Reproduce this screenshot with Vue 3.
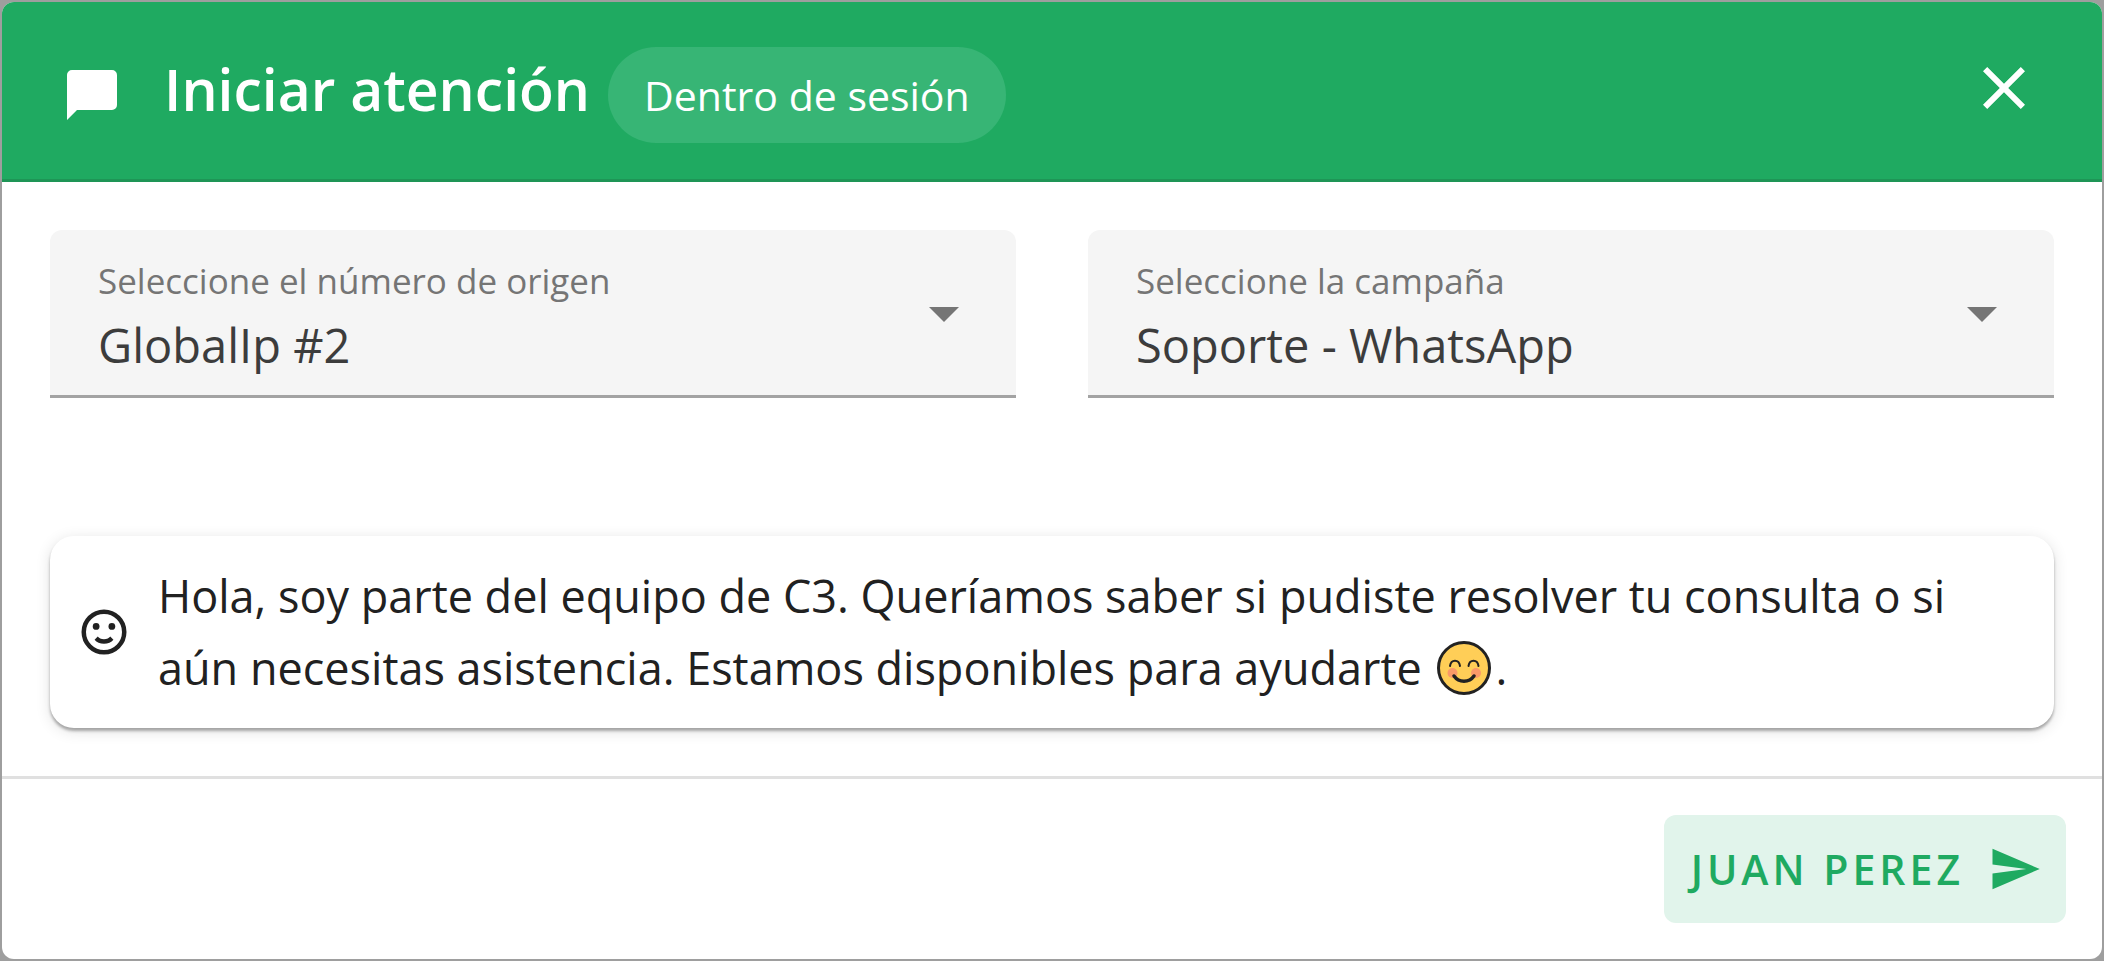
<script setup>
import { ref } from 'vue'

const fields = [
  { id: 'origin', label: 'Seleccione el número de origen', options: ['GlobalIp #2'] },
  { id: 'campaign', label: 'Seleccione la campaña', options: ['Soporte - WhatsApp'] },
]
const selected = ref({ origin: 'GlobalIp #2', campaign: 'Soporte - WhatsApp' })
</script>

<template>
  <main class="dialog" role="dialog" aria-labelledby="dialog-title">
    <header class="toolbar">
      <svg class="icon-title" viewBox="0 0 24 24" aria-hidden="true">
        <path d="M20 2H4a2 2 0 0 0-2 2v18l4-4h14a2 2 0 0 0 2-2V4a2 2 0 0 0-2-2Z" />
      </svg>
      <div class="heading">
        <h1 id="dialog-title" class="title">Iniciar atención</h1>
        <span class="chip">Dentro de sesión</span>
      </div>
      <button class="close" type="button" aria-label="Cerrar">
        <svg viewBox="0 0 24 24" aria-hidden="true">
          <path d="M19 6.41 17.59 5 12 10.59 6.41 5 5 6.41 10.59 12 5 17.59 6.41 19 12 13.41 17.59 19 19 17.59 13.41 12Z" />
        </svg>
      </button>
    </header>

    <section class="content">
      <div class="fields">
        <div v-for="field in fields" :key="field.id" class="field">
          <div class="field-main">
            <label :for="field.id">{{ field.label }}</label>
            <select :id="field.id" v-model="selected[field.id]">
              <option v-for="option in field.options" :key="option">{{ option }}</option>
            </select>
          </div>
          <svg class="arrow" viewBox="0 0 24 24" aria-hidden="true"><path d="m7 10 5 5 5-5Z" /></svg>
        </div>
      </div>

      <div class="composer">
        <button class="emoji-button" type="button" aria-label="Insertar emoji">
          <svg viewBox="0 0 24 24" aria-hidden="true">
            <circle cx="12" cy="12" r="9" fill="none" stroke="currentColor" stroke-width="2" />
            <circle cx="8.5" cy="9.5" r="1.5" />
            <circle cx="15.5" cy="9.5" r="1.5" />
            <path d="M12 17.23c-1.75 0-3.29-.73-4.19-1.81L9.23 14c.45.72 1.52 1.23 2.77 1.23s2.32-.51 2.77-1.23l1.42 1.42c-.9 1.08-2.44 1.81-4.19 1.81Z" />
          </svg>
        </button>
        <div class="message" role="textbox" aria-label="Mensaje" aria-multiline="true" contenteditable="true" spellcheck="false">Hola, soy parte del equipo de C3. Queríamos saber si pudiste resolver tu consulta o si aún necesitas asistencia. Estamos disponibles para ayudarte <svg class="smile" viewBox="0 0 54 54" aria-hidden="true">
            <circle cx="27" cy="27" r="25.500" fill="#ffce57" stroke="#222" stroke-width="3" />
            <circle cx="15.500" cy="32" r="5" fill="#fa9a68" />
            <circle cx="39" cy="32" r="5" fill="#fa9a68" />
            <g fill="none" stroke="#222" stroke-linecap="round">
              <path d="M13 25C14 18 22 18 23 25M31.500 25C32.500 18 40.500 18 41.500 25" stroke-width="2" />
              <path d="M17 35c5 7 15 7 20 0" stroke-width="3.500" />
            </g>
          </svg>.</div>
      </div>
    </section>

    <footer class="actions">
      <button class="send" type="button">
        <span>JUAN PEREZ</span>
        <svg viewBox="0 0 24 24" aria-hidden="true"><path d="m2 21 21-9L2 3v7l15 2-15 2Z" /></svg>
      </button>
    </footer>
  </main>
</template>

<style>
body {
  background: #9e9e9e;
}
</style>

<style scoped>
.dialog {
  margin: 2px;
  overflow: hidden;
  border-radius: 12px;
  background: #fff;
  color: #212121;
  font-family: "Open Sans", "Noto Sans", sans-serif;
}
button,
select {
  border: 0;
  padding: 0;
  background: none;
  color: inherit;
  font: inherit;
  cursor: pointer;
}
svg {
  fill: currentColor;
  flex: none;
}
.toolbar {
  display: flex;
  align-items: flex-end;
  justify-content: space-between;
  box-sizing: border-box;
  min-height: 180px;
  padding: 36px 62px 36px 60px;
  border-bottom: 3px solid #1e9556;
  background: #1faa61;
  color: #fff;
}
.icon-title {
  width: 60px;
  height: 60px;
  margin-bottom: 18px;
}
.heading {
  display: flex;
  flex: 1;
  align-items: baseline;
  gap: 18px;
  margin-left: 42px;
}
.title {
  margin: 0;
  font-size: 57px;
  font-weight: 600;
  line-height: 72px;
}
.chip {
  padding: 0 36px;
  border-radius: 48px;
  background: #37b575;
  font-size: 41px;
  line-height: 96px;
}
.close {
  margin-bottom: 19px;
}
.close svg {
  display: block;
  width: 72px;
  height: 72px;
}
.content {
  padding: 48px;
  border-bottom: 3px solid #e0e0e0;
}
.fields {
  display: grid;
  grid-template-columns: 1fr 1fr;
  gap: 72px;
  margin-bottom: 138px;
}
.field {
  display: flex;
  align-items: center;
  gap: 24px;
  padding: 0 36px 0 48px;
  border-bottom: 3px solid #a3a3a3;
  border-radius: 12px 12px 0 0;
  background: #f5f5f5;
}
.field-main {
  flex: 1;
  padding: 27px 0 14px;
}
.field label {
  display: block;
  margin-bottom: 4px;
  color: #757575;
  font-size: 35px;
  line-height: 48px;
}
.field select {
  display: block;
  width: 100%;
  height: 72px;
  appearance: none;
  color: #3c3c3c;
  font-size: 47px;
}
.arrow {
  width: 72px;
  height: 72px;
  color: #757575;
}
.composer {
  display: flex;
  align-items: center;
  gap: 27px;
  padding: 24px 72px 24px 27px;
  border-radius: 24px;
  box-shadow: 0 3px 3px rgba(0, 0, 0, 0.3), 0 3px 15px rgba(0, 0, 0, 0.12);
}
.emoji-button svg {
  display: block;
  width: 54px;
  height: 54px;
}
.message {
  flex: 1;
  font-size: 45px;
  line-height: 72px;
  outline: none;
}
.smile {
  width: 54px;
  height: 54px;
  margin: 0 4px;
  vertical-align: -10px;
}
.actions {
  display: flex;
  justify-content: flex-end;
  padding: 36px;
}
.send {
  display: flex;
  align-items: center;
  gap: 24px;
  height: 108px;
  padding: 0 24px 0 27px;
  border-radius: 12px;
  background: #e1f4eb;
  color: #1faa61;
  font-size: 41px;
  font-weight: 600;
  letter-spacing: 4px;
}
.send svg {
  width: 54px;
  height: 54px;
}
</style>
